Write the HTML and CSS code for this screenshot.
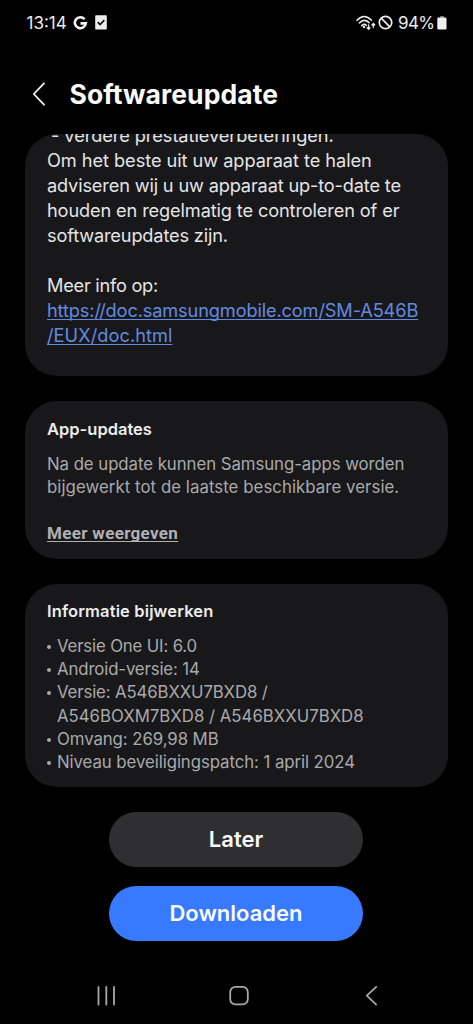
FILE: index.html
```
<!DOCTYPE html>
<html lang="nl">
<head>
<meta charset="utf-8">
<title>Softwareupdate</title>
<link rel="stylesheet" href="styles.css">
</head>
<body>
<div class="screen">
  <header class="status">
    <span class="clock">13:14</span>
    <svg class="google" width="15" height="16" viewBox="0 0 15 16"><path d="M11.6 4.2A5.5 5.5 0 1 0 12.8 8.4H7.5" fill="none" stroke="#f2f2f2" stroke-width="2.6"/></svg>
    <svg class="check" width="12" height="15" viewBox="0 0 12 15"><rect x=".2" y=".3" width="11.6" height="14.2" rx=".8" fill="#ececec"/><path d="M2.8 7.1l2.3 2.4 4.2-4.3" fill="none" stroke="#111" stroke-width="1.7"/></svg>
    <span class="spacer"></span>
    <svg class="wifi" width="20" height="16" viewBox="0 0 20 16" fill="none" stroke="#ececec" stroke-width="1.6" stroke-linecap="round"><path d="M1 5.2Q8.2-2.3 15.4 5.2M3.4 8Q8.2 3 13 7.6M5.8 10.6Q8.2 8.3 10.4 10.3"/><circle cx="8" cy="12" r=".5"/><path d="M12.6 10v4M11.2 12.7l1.4 1.6 1.4-1.6M17.3 12.6V8.8M15.9 10l1.4-1.6L18.7 10" stroke-width="1.3"/></svg>
    <svg class="ban" width="15" height="15" viewBox="0 0 15 15" fill="none" stroke="#ececec" stroke-width="1.7"><circle cx="7.5" cy="7.5" r="6.2"/><path d="M3.2 3.2l8.6 8.6"/></svg>
    <span class="percent">94%</span>
    <svg class="battery" width="10" height="14" viewBox="0 0 10 14"><path d="M3 0h4v2H3z" fill="#777"/><rect x=".3" y="1.6" width="9.2" height="12" rx="1.3" fill="#f0f0f0"/></svg>
  </header>

  <div class="appbar">
    <svg class="back" width="14" height="24" viewBox="0 0 14 24"><path d="M12 1.3L1.8 12 12 22.7" fill="none" stroke="#f4f4f4" stroke-width="1.8" stroke-linecap="round" stroke-linejoin="round"/></svg>
    <h1>Softwareupdate</h1>
  </div>

  <main>
    <section class="card notes">
      <div class="body">
        <p class="indent t07">- verdere prestatieverbeteringen.</p>
        <p class="t05">Om het beste uit uw apparaat te halen</p>
        <p class="t16">adviseren wij u uw apparaat up-to-date te</p>
        <p class="t13">houden en regelmatig te controleren of er</p>
        <p class="t16">softwareupdates zijn.</p>
        <p class="gap t25">Meer info op:</p>
        <p><a class="t13">https:<span class="slash">/</span>/doc.samsungmobile.com/SM-A546B</a></p>
        <p><a class="w06">/EUX/doc.html</a></p>
      </div>
    </section>

    <section class="card apps">
      <h2 class="plain">App-updates</h2>
      <div class="text">
        <p class="t05">Na de update kunnen Samsung-apps worden</p>
        <p class="w06">bijgewerkt tot de laatste beschikbare versie.</p>
      </div>
      <a class="more">Meer weergeven</a>
    </section>

    <section class="card info">
      <h2 class="w13">Informatie bijwerken</h2>
      <ul class="text">
        <li class="t16">Versie One UI: 6.0</li>
        <li class="t13">Android-versie: 14</li>
        <li><span class="t13">Versie: A546BXXU7BXD8 /</span><br>A546BOXM7BXD8 / A546BXXU7BXD8</li>
        <li class="t07">Omvang: 269,98 MB</li>
        <li class="t07">Niveau beveiligingspatch: 1 april 2024</li>
      </ul>
    </section>
  </main>

  <div class="actions">
    <button class="later">Later</button>
    <button class="download">Downloaden</button>
  </div>

  <nav>
    <svg width="20" height="22" viewBox="0 0 20 22" stroke="#a8a8a8" stroke-width="1.8" stroke-linecap="round"><path d="M2.5 2v17.5M10.3 2v17.5M18 2v17.5"/></svg>
    <svg class="home" width="22" height="22" viewBox="0 0 22 22" fill="none" stroke="#a8a8a8" stroke-width="1.8"><rect x="2.2" y="1.8" width="17.6" height="17.6" rx="5.2"/></svg>
    <svg width="13" height="22" viewBox="0 0 13 22" fill="none" stroke="#a8a8a8" stroke-width="1.8" stroke-linecap="round" stroke-linejoin="round"><path d="M11.2 1.8L1.8 10.7l9.4 8.9"/></svg>
  </nav>
</div>
</body>
</html>
```

FILE: styles.css
```
* { box-sizing: border-box; margin: 0; padding: 0; }
body { background: #000; font-family: Inter, "Liberation Sans", sans-serif; }
svg { display: block; flex: none; }
p, li, h1, h2 { white-space: nowrap; }

.screen { width: 473px; height: 1024px; display: flex; flex-direction: column; background: #000; overflow: hidden; }

.status { height: 45px; padding: 0 26px 0 26.5px; display: flex; align-items: center; color: #ececec; font-size: 17px; }
.clock { width: 46px; }
.google { margin-right: 7px; }
.spacer { flex: 1; }
.wifi { margin-right: 2px; }
.ban { margin-right: 5px; }
.percent { width: 39px; font-size: 17px; letter-spacing: -.6px; }

.appbar { height: 89px; padding: 4px 0 0 32px; display: flex; align-items: flex-start; }
.back { margin-top: 33px; }
h1 { margin: 29px 0 0 23.5px; color: #fafafa; font-size: 26.5px; line-height: 32px; font-weight: 700; letter-spacing: .06px; }

main { display: flex; flex-direction: column; gap: 25px; padding: 0 25px; }
.card { background: #18181a; border-radius: 32px; padding: 0 22px; width: 423px; overflow: hidden; }
.notes { height: 242px; }
.body { margin-top: -11.5px; color: #e4e4e6; font-size: 18.2px; line-height: 25px; }
.indent { padding-left: 4px; }
.gap { margin-top: 25px; }
.body a { color: #628be0; text-decoration: underline; text-decoration-thickness: 1.3px; text-underline-offset: 2px; text-decoration-skip-ink: none; }
.slash { letter-spacing: -1.8px; }

.apps { height: 157.5px; padding-top: 17px; }
.info { height: 203.5px; padding-top: 16.5px; }
h2 { color: #ececee; font-size: 16.5px; line-height: 23px; font-weight: 600; }
.text { margin-top: 12px; color: #a9a9ab; font-size: 16.8px; line-height: 23.2px; list-style: none; }
.more { display: block; width: max-content; margin-top: 23px; color: #b0b0b2; font: 700 17px/23.2px Roboto, sans-serif; letter-spacing: .33px; text-decoration: underline; text-decoration-thickness: 1.3px; text-underline-offset: 1.5px; text-decoration-skip-ink: none; }
.info .text { margin-top: 12px; }
li { padding-left: 10px; }
li::before { content: ""; float: left; width: 4px; height: 4px; margin: 10px 0 0 -10px; border-radius: 50%; background: #a9a9ab; }

.t05 { letter-spacing: -.05px; }
.t07 { letter-spacing: -.07px; }
.t13 { letter-spacing: -.13px; }
.t16 { letter-spacing: -.16px; }
.t25 { letter-spacing: -.25px; }
.w06 { letter-spacing: .06px; }
.w13 { letter-spacing: .13px; }

.actions { margin-top: 25px; padding-right: 1px; display: flex; flex-direction: column; align-items: center; gap: 19.5px; }
button { width: 254px; height: 54.5px; border: 0; border-radius: 28px; color: #fafafa; font: 600 22px/30px Inter, sans-serif; }
.later { background: #2f2f31; }
.download { background: #387aff; }

nav { margin-top: 44.5px; padding: 0 95px 0 96px; display: flex; justify-content: space-between; }
.home { margin-left: -4px; }
```
